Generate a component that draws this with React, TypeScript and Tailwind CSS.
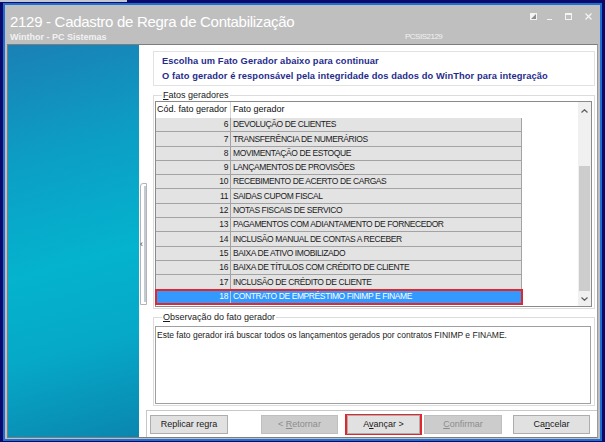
import React from "react";

const rows: [number, string][] = [
  [6, "DEVOLUÇÃO DE CLIENTES"],
  [7, "TRANSFERÊNCIA DE NUMERÁRIOS"],
  [8, "MOVIMENTAÇÃO DE ESTOQUE"],
  [9, "LANÇAMENTOS DE PROVISÕES"],
  [10, "RECEBIMENTO DE ACERTO DE CARGAS"],
  [11, "SAIDAS CUPOM FISCAL"],
  [12, "NOTAS FISCAIS DE SERVICO"],
  [13, "PAGAMENTOS COM ADIANTAMENTO DE FORNECEDOR"],
  [14, "INCLUSÃO MANUAL DE CONTAS A RECEBER"],
  [15, "BAIXA DE ATIVO IMOBILIZADO"],
  [16, "BAIXA DE TÍTULOS COM CRÉDITO DE CLIENTE"],
  [17, "INCLUSÃO DE CRÉDITO DE CLIENTE"],
  [18, "CONTRATO DE EMPRÉSTIMO FINIMP E FINAME"],
];

function Btn({
  children,
  disabled,
  className = "",
}: {
  children: React.ReactNode;
  disabled?: boolean;
  className?: string;
}) {
  return (
    <div
      className={`flex h-[19px] items-center justify-center border text-[9px] ${
        disabled
          ? "border-[#bfbfbf] bg-[#cccccc] text-[#8c8c8c]"
          : "border-[#adadad] bg-[#e1e1e1] text-[#1a1a1a]"
      } ${className}`}
    >
      <span className="whitespace-pre">{children}</span>
    </div>
  );
}

export default function App() {
  return (
    <div className="relative h-[442px] w-[605px] overflow-hidden bg-[#0a0a6c] pl-[3px] pr-[3px] pt-[3px] font-['Liberation_Sans',Arial,sans-serif]">
      {/* strip of the window behind */}
      <div className="absolute left-0 top-0 h-[2px] w-[127px] bg-[#c4c6d4]" />

      <div className="flex h-[438px] w-[599px] flex-col border-2 border-[#1f6fd0] bg-[#bfbfbf]">
        {/* Title */}
        <div className="flex h-[39px] flex-col pl-[5px] pr-[8px] pt-[8px]">
          <div className="flex items-start justify-between">
            <div className="text-[15px] leading-[18px] tracking-[-0.3px] text-white">
              2129 - Cadastro de Regra de Contabilização
            </div>
            <div className="flex items-start">
              <svg width="7" height="7" viewBox="0 0 7 7">
                <rect x="0" y="0" width="7" height="7" fill="#f4f4f4" />
                <polygon points="1,6 6,1 6,6" fill="#8e8e8e" />
              </svg>
              <svg width="5" height="7" viewBox="0 0 5 7" className="ml-[10px]">
                <rect x="0" y="6" width="5" height="1" fill="#f4f4f4" />
              </svg>
              <svg width="7" height="7" viewBox="0 0 7 7" className="ml-[13px]">
                <rect x="0.5" y="0.5" width="6" height="6" fill="none" stroke="#f4f4f4" />
                <rect x="0" y="0" width="7" height="2" fill="#f4f4f4" />
              </svg>
              <svg width="7" height="7" viewBox="0 0 7 7" className="ml-[13px]">
                <path d="M0.5 0.5 L6.5 6.5 M6.5 0.5 L0.5 6.5" stroke="#f4f4f4" strokeWidth="1.3" />
              </svg>
            </div>
          </div>
          <div className="mt-[1px] flex items-center leading-[10px]">
            <div className="w-[395px] text-[9px] font-bold text-[#f2f2f2]">Winthor - PC Sistemas</div>
            <div className="text-[8px] tracking-[-0.5px] text-[#f2f2f2]">PCSIS2129</div>
          </div>
        </div>

        {/* Content */}
        <div className="mx-[2px] flex h-[394px] border border-[#7d7d7d] border-r-[#9a9a9a]">
          <div className="w-[131px] bg-[linear-gradient(165deg,#1a80b5_0%,#0c9ec5_28%,#04b3ce_55%,#06a9c8_75%,#0a86b0_100%)]" />

          <div className="relative flex flex-1 flex-col bg-white">
            {/* splitter handle */}
            <div className="absolute left-[1px] top-[138px] flex h-[122px] w-[7px] items-center rounded-tl-[3px] border border-[#b4b4b4] bg-white">
              <span className="ml-[-1px] text-[9px] leading-none text-[#333]">‹</span>
              <div className="absolute right-[0px] top-[2px] h-[116px] w-[2px] bg-[#c3cad2]" />
            </div>

            <div className="ml-[14px] w-[442px] pt-[6px]">
              {/* header box */}
              <div className="flex h-[35px] flex-col justify-center border border-[#e2e2e2] pl-[8px] text-[9.3px] font-bold leading-[15px] tracking-[0.1px] text-[#1f2c8c]">
                <div>Escolha um Fato Gerador abaixo para continuar</div>
                <div>O fato gerador é responsável pela integridade dos dados do WinThor para integração</div>
              </div>

              {/* Fatos geradores */}
              <fieldset className="mt-[4px] border border-[#dcdcdc] pb-[1px] pl-[1px] pr-[2px]">
                <legend className="ml-[7px] px-[1px] text-[9px] leading-[10px] text-[#1a1a1a]">
                  <u>F</u>atos geradores
                </legend>
                <div className="mt-[1px] flex h-[206px] border border-[#8a8a8a] bg-white">
                  <div className="flex-1">
                    <div className="flex h-[16px] items-center text-[9px] text-[#111]">
                      <div className="flex h-full w-[75px] items-center border-r border-[#d6d6d6] pl-[1px]">
                        Cód. fato gerador
                      </div>
                      <div className="pl-[2px]">Fato gerador</div>
                    </div>
                    {rows.map(([code, name]) => {
                      const sel = code === 18;
                      return (
                        <div
                          key={code}
                          className={`flex h-[14.3px] w-[366px] items-center text-[8.5px] tracking-[-0.4px] ${
                            sel
                              ? "bg-[#3399ff] text-white outline-2 -outline-offset-1 outline-[#e3262b]"
                              : "border-b border-[#a3a3a3] bg-[#e3e3e3] text-[#1a1a1a]"
                          }`}
                        >
                          <div
                            className={`flex h-full w-[75px] items-center justify-end pr-[2px] ${
                              sel ? "border-r border-[#a8cff5]" : "border-r border-[#a3a3a3]"
                            }`}
                          >
                            {code}
                          </div>
                          <div
                            className={`flex h-full flex-1 items-center pl-[2px] ${
                              sel ? "" : "border-r border-[#a3a3a3]"
                            }`}
                          >
                            {name}
                          </div>
                        </div>
                      );
                    })}
                  </div>

                  {/* scrollbar */}
                  <div className="flex w-[13px] flex-col bg-[#f0f0f0]">
                    <div className="flex h-[17px] items-center justify-center">
                      <svg width="7" height="4" viewBox="0 0 7 4">
                        <path d="M0.5 3.5 L3.5 0.7 L6.5 3.5" fill="none" stroke="#606060" strokeWidth="1.2" />
                      </svg>
                    </div>
                    <div className="h-[47px]" />
                    <div className="mx-[1px] h-[125px] bg-[#cdcdcd]" />
                    <div className="flex flex-1 items-center justify-center">
                      <svg width="7" height="4" viewBox="0 0 7 4">
                        <path d="M0.5 0.5 L3.5 3.3 L6.5 0.5" fill="none" stroke="#606060" strokeWidth="1.2" />
                      </svg>
                    </div>
                  </div>
                </div>
              </fieldset>

              {/* Observação */}
              <fieldset className="mt-[3px] border border-[#dcdcdc] pb-[1px] pl-[1px] pr-[3px]">
                <legend className="ml-[7px] px-[1px] text-[9px] leading-[10px] text-[#1a1a1a]">
                  <u>O</u>bservação do fato gerador
                </legend>
                <div className="mt-[4px] h-[78px] border border-[#a0a0a0] pl-[1px] pt-[2px] text-[8.5px] leading-[12px] text-[#1a1a1a]">
                  Este fato gerador irá buscar todos os lançamentos gerados por contratos FINIMP e FINAME.
                </div>
              </fieldset>
            </div>

            {/* bottom buttons */}
            <div className="ml-[7px] mt-[4px] flex flex-1 items-start border-l border-t border-[#c8c8c8] pl-[3px] pt-[4px]">
              <Btn className="w-[78px]">Replicar regra</Btn>
              <Btn disabled className="ml-[33px] w-[77px]">
                {"< "}
                <u>R</u>etornar
              </Btn>
              <div className="-mt-[1px] ml-[7px] flex h-[21px] w-[77px] items-center justify-center border-2 border-[#e3262b]">
                <Btn className="h-[17px] w-[73px] border-[#8c8c8c]">
                  A<u>v</u>ançar {">"}
                </Btn>
              </div>
              <Btn disabled className="ml-[2px] w-[78px]">
                <u>C</u>onfirmar
              </Btn>
              <Btn className="ml-[11px] w-[77px]">
                Ca<u>n</u>celar
              </Btn>
            </div>
          </div>
        </div>
      </div>
    </div>
  );
}
